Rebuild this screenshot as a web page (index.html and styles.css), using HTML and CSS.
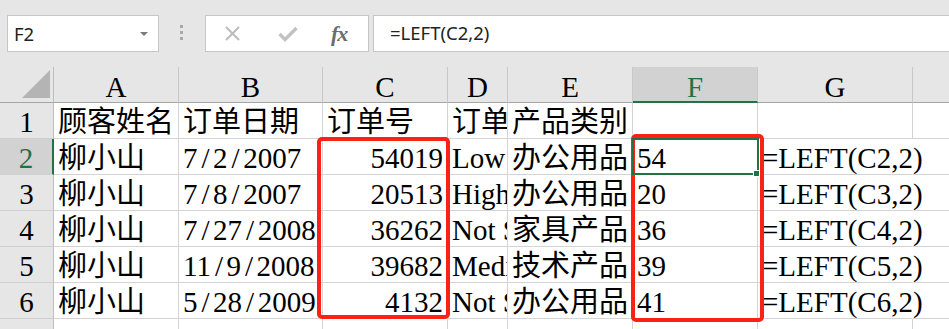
FILE: index.html
```html
<!DOCTYPE html>
<html lang="zh-CN">
<head>
    <meta charset="UTF-8">
    <title>LEFT 函数 - 取订单号前两位</title>
    <link rel="stylesheet" href="styles.css">
</head>
<body>

<div class="toolbar">
    <div class="namebox">
        <span>F2</span>
        <span class="caret"></span>
    </div>
    <div class="grip"><i></i><i></i><i></i></div>
    <div class="fxbox">
        <svg class="ico-x" width="17" height="15" viewBox="0 0 17 15">
            <path d="M2 1 L15 14 M15 1 L2 14" stroke="#bcbcbc" stroke-width="2" fill="none"/>
        </svg>
        <svg class="ico-ok" width="20" height="16" viewBox="0 0 20 16">
            <path d="M1.5 8 L7 13.5 L18.5 2" stroke="#c2c2c2" stroke-width="3.4" fill="none"/>
        </svg>
        <span class="fx">fx</span>
    </div>
    <div class="formula">=LEFT(C2,2)</div>
</div>

<div class="sheet">
    <!-- en-têtes de colonnes -->
    <div class="hd corner"><span class="tri"></span></div>
    <div class="hd">A</div>
    <div class="hd">B</div>
    <div class="hd">C</div>
    <div class="hd">D</div>
    <div class="hd">E</div>
    <div class="hd hd-sel">F</div>
    <div class="hd">G</div>
    <div class="hd hd-last"></div>

    <!-- ligne 1 -->
    <div class="rh">1</div>
    <div class="c">顾客姓名</div>
    <div class="c">订单日期</div>
    <div class="c">订单号</div>
    <div class="c">订单优先级</div>
    <div class="c">产品类别</div>
    <div class="c"></div>
    <div class="c"></div>
    <div class="c c-last"></div>

    <!-- ligne 2 -->
    <div class="rh rh-sel">2</div>
    <div class="c">柳小山</div>
    <div class="c">7<span class="sl">/</span>2<span class="sl">/</span>2007</div>
    <div class="c num">54019</div>
    <div class="c">Low</div>
    <div class="c">办公用品</div>
    <div class="c active">54</div>
    <div class="c spill">=LEFT(C2,2)</div>
    <div class="c c-last"></div>

    <!-- ligne 3 -->
    <div class="rh">3</div>
    <div class="c">柳小山</div>
    <div class="c">7<span class="sl">/</span>8<span class="sl">/</span>2007</div>
    <div class="c num">20513</div>
    <div class="c">High</div>
    <div class="c">办公用品</div>
    <div class="c">20</div>
    <div class="c spill">=LEFT(C3,2)</div>
    <div class="c c-last"></div>

    <!-- ligne 4 -->
    <div class="rh">4</div>
    <div class="c">柳小山</div>
    <div class="c">7<span class="sl">/</span>27<span class="sl">/</span>2008</div>
    <div class="c num">36262</div>
    <div class="c">Not Specified</div>
    <div class="c">家具产品</div>
    <div class="c">36</div>
    <div class="c spill">=LEFT(C4,2)</div>
    <div class="c c-last"></div>

    <!-- ligne 5 -->
    <div class="rh">5</div>
    <div class="c">柳小山</div>
    <div class="c">11<span class="sl">/</span>9<span class="sl">/</span>2008</div>
    <div class="c num">39682</div>
    <div class="c">Medium</div>
    <div class="c">技术产品</div>
    <div class="c">39</div>
    <div class="c spill">=LEFT(C5,2)</div>
    <div class="c c-last"></div>

    <!-- ligne 6 -->
    <div class="rh">6</div>
    <div class="c">柳小山</div>
    <div class="c">5<span class="sl">/</span>28<span class="sl">/</span>2009</div>
    <div class="c num">4132</div>
    <div class="c">Not Specified</div>
    <div class="c">办公用品</div>
    <div class="c">41</div>
    <div class="c spill">=LEFT(C6,2)</div>
    <div class="c c-last"></div>

    <!-- ligne 7 -->
    <div class="rh">7</div>
    <div class="c"></div>
    <div class="c"></div>
    <div class="c"></div>
    <div class="c"></div>
    <div class="c"></div>
    <div class="c"></div>
    <div class="c"></div>
    <div class="c c-last"></div>
</div>

<!-- cadres rouges d'annotation -->
<div class="mark mark-c"></div>
<div class="mark mark-f"></div>

</body>
</html>
```

FILE: styles.css
```css
body {
    margin: 0;
    width: 949px;
    height: 329px;
    overflow: hidden;
    background-color: #e6e6e6;
    position: relative;
}

/* barre de formule */
.toolbar {
    height: 67px;
    display: flex;
    align-items: flex-start;
    padding: 15px 0 0 7px;
    box-sizing: border-box;
    font-family: "Noto Sans", sans-serif;
    font-size: 18.5px;
    color: #222;
}
.namebox {
    width: 152px;
    height: 37px;
    box-sizing: border-box;
    background-color: #fff;
    border: 1px solid #c6c6c6;
    display: flex;
    align-items: center;
    justify-content: space-between;
    padding: 0 10px 0 6px;
}
.caret {
    width: 0;
    height: 0;
    border-left: 4px solid transparent;
    border-right: 4px solid transparent;
    border-top: 4px solid #7a7a7a;
    margin-top: 1px;
}
.grip {
    display: flex;
    flex-direction: column;
    gap: 3px;
    margin: 10px 0 0 21px;
}
.grip i {
    display: block;
    width: 3px;
    height: 3px;
    background-color: #a8a8a8;
}
.fxbox {
    width: 164px;
    height: 37px;
    box-sizing: border-box;
    margin-left: 22px;
    background-color: #fff;
    border: 1px solid #c6c6c6;
    display: flex;
    align-items: center;
    padding-left: 18px;
}
.ico-ok {
    margin-left: 37px;
}
.fx {
    margin-left: 33px;
    font-family: "Liberation Serif", serif;
    font-style: italic;
    font-weight: bold;
    font-size: 22px;
    color: #6c6c6c;
    letter-spacing: -1px;
}
.formula {
    flex: 1;
    height: 37px;
    box-sizing: border-box;
    margin-left: 4px;
    background-color: #fff;
    border: 1px solid #c6c6c6;
    border-right: none;
    padding-left: 16px;
    line-height: 34px;
}

/* feuille */
.sheet {
    display: grid;
    grid-template-columns: 54px 125px 144px 125px 60px 125px 125px 155px 1fr;
    grid-auto-rows: 36px;
    background-color: #fff;
    font-family: "Liberation Serif", "Noto Sans CJK SC", serif;
    font-size: 29px;
    color: #000;
}
.hd {
    background-color: #e6e6e6;
    border-right: 1px solid #c8c8c8;
    border-bottom: 1px solid #a6a6a6;
    text-align: center;
    line-height: 40px;
    overflow: hidden;
}
.hd-last {
    border-right: none;
}
.hd-sel {
    background-color: #d2d2d2;
    color: #217346;
    border-bottom: 2px solid #217346;
}
.corner {
    display: flex;
    justify-content: flex-end;
    align-items: flex-end;
    padding: 0 3px 4px 0;
    border-right-color: #bdbdbd;
}
.tri {
    width: 28px;
    height: 28px;
    background-color: #b4b4b4;
    clip-path: polygon(100% 0, 100% 100%, 0 100%);
}
.rh {
    background-color: #e6e6e6;
    border-right: 1px solid #bdbdbd;
    border-bottom: 1px solid #cfcfcf;
    text-align: center;
    line-height: 38px;
    overflow: hidden;
}
.rh-sel {
    background-color: #d2d2d2;
    color: #217346;
    border-right: 2px solid #217346;
}
.c {
    border-right: 1px solid #d4d4d4;
    border-bottom: 1px solid #d4d4d4;
    padding: 0 4px;
    line-height: 38px;
    white-space: nowrap;
    overflow: hidden;
}
.c-last {
    border-right: none;
}
.num {
    text-align: right;
}
/* la barre oblique des dates prend une demi-chasse comme les chiffres */
.sl {
    padding: 0 3.5px 0 4px;
}
.spill {
    overflow: visible;
    border-right-color: transparent;
}
.active {
    position: relative;
    overflow: visible;
    z-index: 1;
}
.active::after {
    content: "";
    position: absolute;
    left: -1px;
    top: -1px;
    right: -2px;
    bottom: -1px;
    border: 2px solid #217346;
}
.active::before {
    content: "";
    position: absolute;
    right: -3px;
    bottom: -3px;
    width: 5px;
    height: 5px;
    background-color: #217346;
    border: 1px solid #fff;
    z-index: 2;
}

/* annotations */
.mark {
    position: absolute;
    border: 4px solid #fa2216;
    border-radius: 5px;
    box-sizing: border-box;
}
.mark-c {
    left: 317px;
    top: 137px;
    width: 133px;
    height: 182px;
}
.mark-f {
    left: 631px;
    top: 134px;
    width: 133px;
    height: 188px;
}
```
